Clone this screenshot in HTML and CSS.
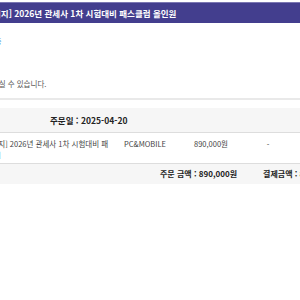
FILE: index.html
```html
<!DOCTYPE html>
<html lang="ko">
<head>
  <meta charset="UTF-8">
  <title>주문 상세</title>
  <link rel="stylesheet" href="styles.css">
</head>
<body>
  <div class="page">
    <div class="title-bar">[패키지] 2026년 관세사 1차 시험대비 패스클럽 올인원</div>

    <p class="more"><a href="#">수강중</a></p>

    <p class="notice">이용하실 수 있습니다.</p>

    <div class="order">
      <div class="order-date">주문일 : 2025-04-20</div>
      <div class="order-row">
        <div class="cell name">
          <span class="name-text">[패키지] 2026년 관세사 1차 시험대비 패</span>
          <a href="#" class="detail">[보기]</a>
        </div>
        <div class="cell">PC&amp;MOBILE</div>
        <div class="cell">890,000원</div>
        <div class="cell">-</div>
      </div>
      <div class="order-sum">
        <span>주문 금액 : 890,000원</span>
        <span>결제금액 : 890,000원</span>
      </div>
    </div>
  </div>
</body>
</html>
```

FILE: styles.css
```css
html, body {
  margin: 0;
  overflow: hidden;
}
body {
  font-family: "Noto Sans CJK KR", "Noto Sans", sans-serif;
  color: #333;
  background: #fff;
}
.page {
  width: 420px;
  margin-left: -18px;
  padding-top: 2px;
}
.title-bar {
  height: 20px;
  line-height: 20px;
  background: #433e8e;
  border-top: 1px solid #7b77b3;
  color: #fff;
  font-size: 8.5px;
  font-weight: 700;
}
.more {
  margin: 12px 0 0;
  font-size: 7px;
  line-height: 12px;
}
.more a {
  color: #3b7fd9;
  text-decoration: none;
}
.notice {
  margin: 31px 0 0;
  font-size: 7.5px;
  line-height: 12px;
  color: #555;
  text-indent: -4px;
}
.order {
  margin-top: 8px;
  border-top: 2px solid #e9e9e9;
}
.order-date {
  margin-top: 8px;
  height: 24px;
  line-height: 24px;
  background: #f6f6f6;
  border-bottom: 1px solid #ddd;
  padding-left: 68px;
  font-size: 8.5px;
  font-weight: 700;
  color: #222;
}
.order-row {
  display: grid;
  grid-template-columns: 130px 66px 66px 48px;
  border-bottom: 1px solid #ddd;
  height: 30px;
  font-size: 7.5px;
  color: #444;
}
.cell {
  text-align: center;
  padding-top: 5px;
  line-height: 11px;
}
.cell.name {
  text-align: left;
}
.name-text {
  display: block;
  white-space: nowrap;
}
.detail {
  display: block;
  color: #3b7fd9;
  text-decoration: none;
}
.order-sum {
  display: flex;
  gap: 26px;
  height: 20px;
  line-height: 20px;
  padding-left: 178px;
  background: #f6f6f6;
  font-size: 8px;
  font-weight: 700;
  color: #222;
}
```
